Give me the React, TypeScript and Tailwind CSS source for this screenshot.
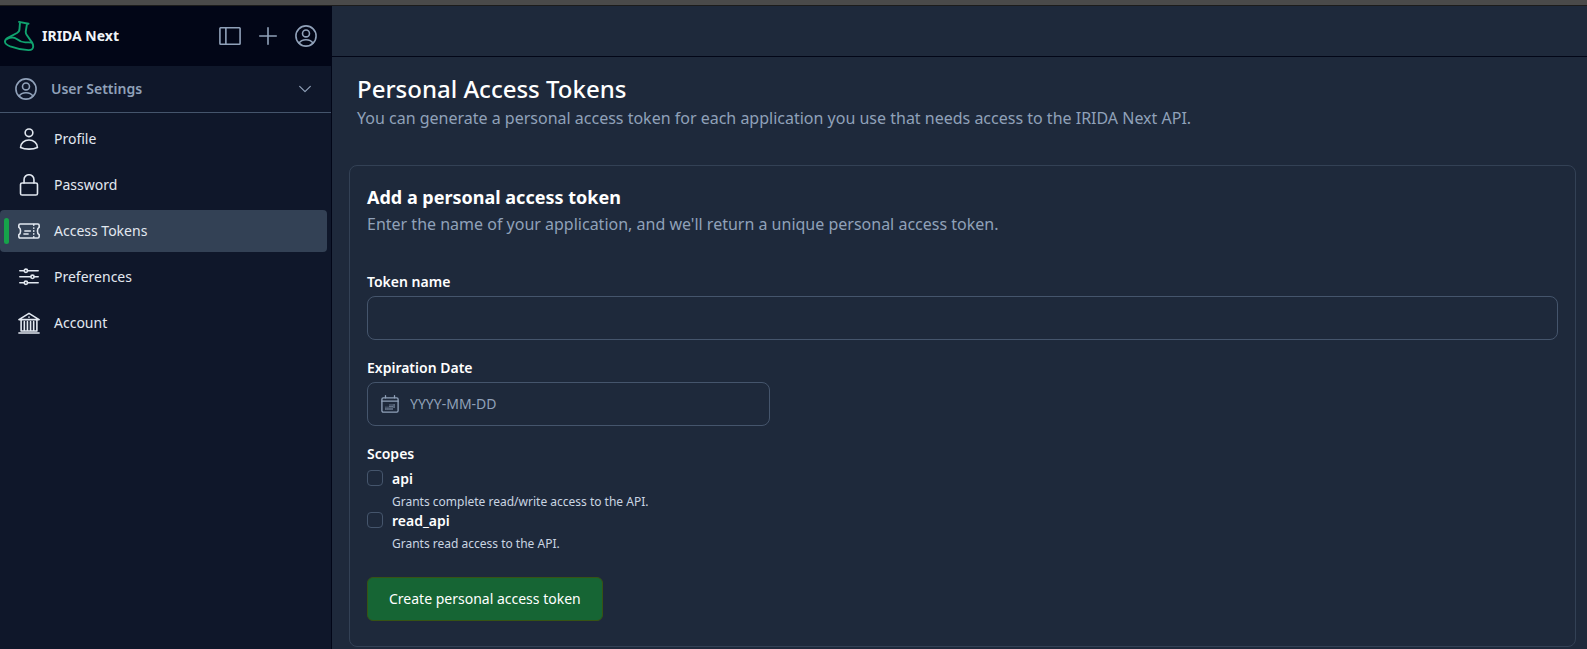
import React from "react";

type IconProps = { className?: string; children?: React.ReactNode };

function Icon({ className, children }: IconProps) {
  return (
    <svg
      viewBox="0 0 24 24"
      fill="none"
      stroke="currentColor"
      strokeWidth="1.75"
      strokeLinecap="round"
      strokeLinejoin="round"
      aria-hidden="true"
      className={className}
    >
      {children}
    </svg>
  );
}

function UserCircle({ className }: IconProps) {
  return (
    <Icon className={className}>
      <circle cx="12" cy="12" r="11" />
      <circle cx="12" cy="9.200" r="3.800" />
      <path d="M4.400 19.800c1.500-2.600 4.300-3.700 7.600-3.700s6.100 1.100 7.600 3.700" />
    </Icon>
  );
}

function ProfileIcon() {
  return (
    <Icon className="size-[22px] shrink-0">
      <circle cx="12" cy="5.250" r="4.200" />
      <path d="M2.800 21.200c0-4.900 4.100-8.100 9.200-8.100s9.200 3.200 9.200 8.100c-2.700 1.300-5.800 1.800-9.200 1.800s-6.500-.5-9.200-1.800Z" />
    </Icon>
  );
}

function LockIcon() {
  return (
    <Icon className="size-[22px] shrink-0">
      <rect x="2.750" y="9.750" width="18.500" height="13.200" rx="1.800" />
      <path d="M6.600 9.750V6.200a5.400 5.400 0 0 1 10.800 0v3.550" />
    </Icon>
  );
}

function TicketIcon() {
  return (
    <Icon className="size-[22px] shrink-0">
      <path d="M2.300 4.400h19.400c.9 0 1.400.6 1.400 1.500v2c-1.400.7-1.900 2.100-1.900 4.100s.5 3.400 1.900 4.100v2c0 .9-.5 1.500-1.400 1.500H2.300c-.9 0-1.400-.6-1.400-1.500v-2c1.400-.7 1.900-2.100 1.900-4.100S2.300 8.600.9 7.900v-2c0-.9.5-1.500 1.400-1.500Z" />
      <path d="M7.500 12h6M6.500 15.200h4.500" />
      <path d="M17.200 5v.8M17.200 8.700v.3M17.200 11.900v.3M17.200 15.100v.3M17.200 18.200v.8" />
    </Icon>
  );
}

function SlidersIcon() {
  return (
    <Icon className="size-[22px] shrink-0">
      <path d="M2 5.200h4.800M10.400 5.200H22M2 11.800h12M17.600 11.800H22M2 18.300h4.800M10.400 18.300H22" />
      <circle cx="8.600" cy="5.200" r="1.800" />
      <circle cx="15.800" cy="11.800" r="1.800" />
      <circle cx="8.600" cy="18.300" r="1.800" />
    </Icon>
  );
}

function BankIcon() {
  return (
    <Icon className="size-[22px] shrink-0">
      <path d="M1 8.300 12 1.500l11 6.800ZM1 22.900h22" />
      <path d="M3.400 8.500v12.200M20.600 8.500v12.200M3.400 20.700h17.200M6.900 10.500v10M10.300 10.500v10M13.700 10.500v10M17.100 10.500v10M12 5.500v.2" />
    </Icon>
  );
}

function CalendarIcon() {
  return (
    <Icon className="size-[18px] shrink-0">
      <rect x="1.200" y="3.800" width="21.600" height="19" rx="1.800" />
      <path d="M1.200 8.200h21.600M6 1v2.800M18 1v2.800" />
      <path
        strokeDasharray="1.900 0.900"
        strokeLinecap="butt"
        d="M6.600 19.500v-3.900M9.300 19.500v-3.900M12 19.500v-6.700M14.700 19.500v-6.700M17.400 17v-4.600"
      />
    </Icon>
  );
}

function Logo() {
  return (
    <svg
      viewBox="0 0 32 32"
      fill="none"
      stroke="#10a36f"
      strokeWidth="1.900"
      strokeLinecap="round"
      strokeLinejoin="round"
      aria-hidden="true"
      className="size-8 shrink-0"
    >
      <path d="M15 1.900 24.500 3.700M16 2.400l-.6 7.600c-.2 1.500-1 2.200-2.400 3L4.200 17.600C1.700 19 .8 20.400 1 22c.2 1.900 2.200 3.100 5.200 4.300 5.500 2 12.300 3.500 18.300 3.800 3.500.1 4.700-1.400 4.700-3.900 0-1.600-.4-2.500-1.300-3.800l-5.300-7.700c-.8-1.200-1-2.100-.8-3.500l1.200-7.300" />
      <path d="M3 18.800c3.500-1.600 7.200-1.700 9.700.2 2.500 2 5 3.300 8.500 3.400 2.800 0 4.800-.3 7 .3" />
    </svg>
  );
}

const navItems = [
  { label: "Profile", icon: <ProfileIcon /> },
  { label: "Password", icon: <LockIcon /> },
  { label: "Access Tokens", icon: <TicketIcon />, active: true },
  { label: "Preferences", icon: <SlidersIcon /> },
  { label: "Account", icon: <BankIcon /> },
];

const scopes = [
  { name: "api", help: "Grants complete read/write access to the API." },
  { name: "read_api", help: "Grants read access to the API." },
];

function Sidebar() {
  return (
    <aside className="flex w-[332px] shrink-0 flex-col border-r border-[#020617] bg-[#0f172a]">
      <div className="flex h-[60px] items-center bg-[#020617] pr-[14px] pl-1">
        <Logo />
        <a href="#home" className="ml-1.5 text-sm font-bold text-slate-100">
          IRIDA Next
        </a>
        <div className="ml-auto flex items-center gap-4 text-slate-400">
          <button type="button" aria-label="Toggle sidebar">
            <Icon className="size-[22px]">
              <rect x="1" y="3" width="22" height="18" rx="0.800" />
              <path d="M7.500 3v18" />
            </Icon>
          </button>
          <button type="button" aria-label="Create new">
            <Icon className="size-[22px]">
              <path d="M12 3v18M3 12h18" />
            </Icon>
          </button>
          <button type="button" aria-label="Account menu">
            <UserCircle className="size-[22px]" />
          </button>
        </div>
      </div>
      <button
        type="button"
        className="flex h-[47px] items-center border-b border-slate-600 pr-[18px] pl-[15px] text-slate-400"
      >
        <UserCircle className="size-[22px]" />
        <span className="ml-[14px] text-sm font-semibold">User Settings</span>
        <Icon className="ml-auto size-4">
          <path d="m4 8 8 8 8-8" />
        </Icon>
      </button>
      <nav className="flex flex-col gap-1 pt-[5px] pr-1">
        {navItems.map((item) => (
          <a
            key={item.label}
            href="#settings"
            aria-current={item.active ? "page" : undefined}
            className={
              item.active
                ? "relative flex h-[42px] items-center gap-[14px] rounded-sm bg-[#334155] pl-[18px] text-sm text-slate-200"
                : "flex h-[42px] items-center gap-[14px] rounded-sm pl-[18px] text-sm text-slate-200"
            }
          >
            {item.active && (
              <span className="absolute inset-y-2 left-1 w-[5px] rounded-sm bg-[#16a34a]" />
            )}
            {item.icon}
            {item.label}
          </a>
        ))}
      </nav>
    </aside>
  );
}

function TokenForm() {
  return (
    <form className="mt-[35px] flex flex-col rounded-lg border border-[#334155] px-[17px] pt-[19px] pb-[25px]">
      <h2 className="text-lg leading-6 font-bold text-white">Add a personal access token</h2>
      <p className="mt-[3px] text-base leading-6 text-slate-400">
        Enter the name of your application, and we'll return a unique personal access token.
      </p>

      <label htmlFor="token-name" className="mt-9 text-sm font-semibold text-white">
        Token name
      </label>
      <input
        id="token-name"
        type="text"
        className="mt-1 h-11 w-full rounded-lg border border-slate-600 bg-transparent px-3 text-sm text-white"
      />

      <label htmlFor="expiration" className="mt-[18px] text-sm font-semibold text-white">
        Expiration Date
      </label>
      <div className="mt-1 flex h-11 w-full max-w-[403px] items-center gap-[11px] rounded-lg border border-slate-600 px-[13px] text-slate-400">
        <CalendarIcon />
        <input
          id="expiration"
          type="text"
          placeholder="YYYY-MM-DD"
          className="min-w-0 flex-1 bg-transparent text-sm text-white outline-none placeholder:text-slate-400"
        />
      </div>

      <fieldset className="mt-[18px]">
        <legend className="text-sm font-semibold text-white">Scopes</legend>
        <div className="mt-[5px]">
          {scopes.map((scope) => (
            <div key={scope.name} className="flex h-[42px] gap-[9px]">
              <input
                id={scope.name}
                type="checkbox"
                aria-describedby={scope.name + "-help"}
                className="mt-px size-4 appearance-none rounded border border-slate-600 checked:bg-green-700"
              />
              <div>
                <label htmlFor={scope.name} className="block text-sm font-semibold text-white">
                  {scope.name}
                </label>
                <p id={scope.name + "-help"} className="mt-[5px] text-xs text-slate-300">
                  {scope.help}
                </p>
              </div>
            </div>
          ))}
        </div>
      </fieldset>

      <button
        type="button"
        className="mt-6 h-11 self-start rounded-md border border-[#365314] bg-[#166534] px-[21px] text-sm text-white"
      >
        Create personal access token
      </button>
    </form>
  );
}

export default function App() {
  return (
    <div className="flex min-h-screen flex-col bg-[#1e293b] font-['Noto_Sans',sans-serif]">
      <div className="h-1.5 border-b border-[#1c1c1c] bg-[#4a4a4a]" />
      <div className="flex flex-1">
        <Sidebar />
        <div className="min-w-0 flex-1">
          <div className="h-[51px] border-b border-[#020617]" />
          <main className="pt-4 pr-[11px] pb-0.5 pl-[17px]">
            <div className="pl-2">
              <h1 className="text-2xl leading-8 font-medium text-white">Personal Access Tokens</h1>
              <p className="mt-px text-base leading-6 text-slate-400">
                You can generate a personal access token for each application you use that needs
                access to the IRIDA Next API.
              </p>
            </div>
            <TokenForm />
          </main>
        </div>
      </div>
    </div>
  );
}
